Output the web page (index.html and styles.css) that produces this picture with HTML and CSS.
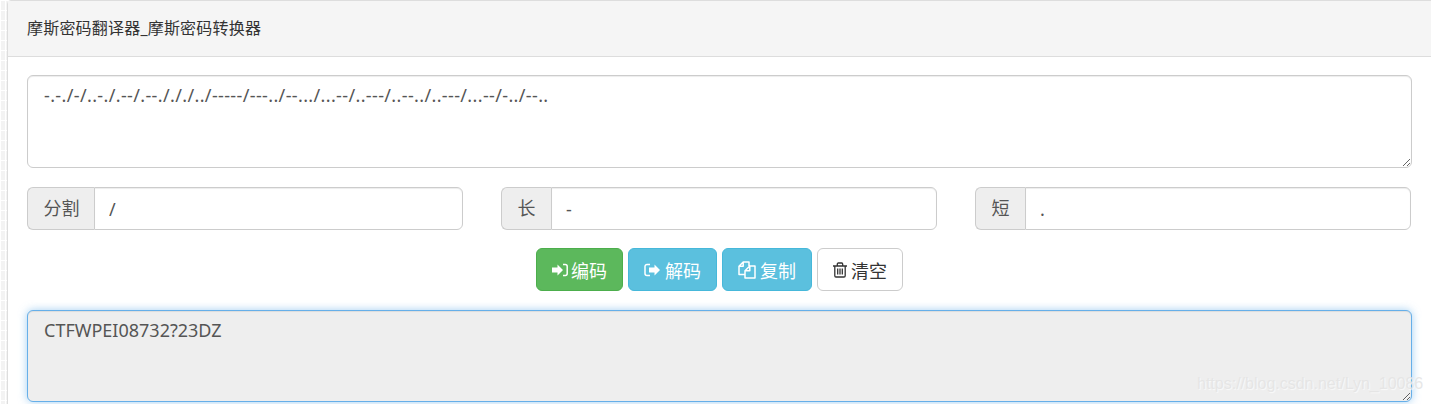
FILE: index.html
```html
<!DOCTYPE html>
<html lang="zh-CN">

<head>
    <meta charset="utf-8">
    <meta name="viewport" content="width=device-width, initial-scale=1.0">
    <title>摩斯密码翻译器_摩斯密码转换器</title>
    <link rel="stylesheet" href="styles.css">
</head>

<body>
    <section class="panel">
        <div class="panel_heading">摩斯密码翻译器_摩斯密码转换器</div>
        <div class="panel_body">
            <textarea class="code_box morse_box" spellcheck="false">-.-./-/..-./.--/.--./././../-----/---../--.../...--/..---/..--../..---/...--/-../--..</textarea>

            <div class="input_row">
                <div class="input_group">
                    <span class="addon addon_split">分割</span>
                    <input type="text" value="/">
                </div>
                <div class="input_group">
                    <span class="addon">长</span>
                    <input type="text" value="-">
                </div>
                <div class="input_group">
                    <span class="addon">短</span>
                    <input type="text" value=".">
                </div>
            </div>

            <div class="button_row">
                <button class="btn btn_green">
                    <svg class="icon" viewBox="0 0 16 16"><path fill="currentColor" d="M0 5.5h5.5v-3L11 8l-5.5 5.5v-3H0z"/><path fill="none" stroke="currentColor" stroke-width="1.5" d="M11 2.500h2.200a2 2 0 0 1 2 2v7a2 2 0 0 1-2 2H11"/></svg>
                    编码
                </button>
                <button class="btn btn_blue btn_decode">
                    <svg class="icon" viewBox="0 0 16 16"><path fill="none" stroke="currentColor" stroke-width="1.5" d="M6 2.500H3a2 2 0 0 0-2 2v7a2 2 0 0 0 2 2h3"/><path fill="currentColor" d="M5 5.5h5.5v-3L16 8l-5.500 5.500v-3H5z"/></svg>
                    解码
                </button>
                <button class="btn btn_blue">
                    <svg class="icon icon_copy" viewBox="0 0 18 18"><path fill="none" stroke="currentColor" stroke-width="1.5" stroke-linejoin="round" d="M11 5V1H5.200L1 5.200V13.500h6M5.200 1v4.200H1M11.800 5H17v12H7V9.800zM11.800 5v4.800H7"/></svg>
                    复制
                </button>
                <button class="btn btn_white">
                    <svg class="icon icon_trash" viewBox="0 0 14 16"><path fill="none" stroke="currentColor" stroke-width="1.3" d="M0 4h14M1.800 4v9.700c0 .8.500 1.300 1.200 1.300h8c.7 0 1.200-.5 1.200-1.300V4M4.300 4V2.200c0-.7.400-1.200 1-1.200h3.400c.6 0 1 .5 1 1.200V4M4.700 6.500v6M7 6.500v6M9.300 6.500v6"/></svg>
                    清空
                </button>
            </div>

            <textarea class="code_box result_box" spellcheck="false" readonly>CTFWPEI08732?23DZ</textarea>
        </div>
    </section>

    <div class="watermark">https://blog.csdn.net/Lyn_10086</div>
</body>

</html>
```

FILE: styles.css
```css
* {
    box-sizing: border-box;
}

html,
body {
    height: 100%;
}

body {
    margin: 0;
    overflow: hidden;
    position: relative;
    font-family: "Noto Sans", "Noto Sans CJK SC", sans-serif;
    color: #555;
    background-color: #f3f3f3;
    background-image:
        linear-gradient(white 1px, transparent 1px),
        linear-gradient(90deg, white 1px, transparent 1px);
    background-size: 5px 10px;
}

.panel {
    width: 1425px;
    height: 420px;
    margin-left: 7px;
    background-color: white;
    border: 1px solid #ddd;
    border-radius: 4px 0 0 0;
}

.panel_heading {
    height: 56px;
    padding: 0 19px;
    line-height: 55px;
    font-size: 16px;
    letter-spacing: 0.2px;
    color: #333;
    background-color: #f5f5f5;
    border-bottom: 1px solid #ddd;
}

.panel_body {
    padding: 18px 19px;
}

.code_box {
    display: block;
    width: 1385px;
    height: 93px;
    padding: 6px 16px;
    font-family: inherit;
    font-size: 18px;
    line-height: 26px;
    color: #555;
    background-color: white;
    border: 1px solid #ccc;
    border-radius: 6px;
    box-shadow: inset 0 1px 1px rgba(0, 0, 0, 0.075);
    outline: none;
}

.morse_box {
    letter-spacing: 0.36px;
}

.result_box {
    height: 92px;
    background-color: #eee;
    border-color: #66afe9;
    box-shadow: inset 0 1px 1px rgba(0, 0, 0, 0.075), 0 0 8px rgba(102, 175, 233, 0.6);
}

.input_row {
    display: grid;
    grid-template-columns: 436px 436px 436px;
    column-gap: 38px;
    margin-top: 19px;
}

.input_group {
    display: flex;
    height: 43px;
}

.addon {
    flex: none;
    padding: 0 15.5px;
    font-size: 18px;
    line-height: 41px;
    background-color: #eee;
    border: 1px solid #ccc;
    border-right: none;
    border-radius: 6px 0 0 6px;
}

.addon_split {
    padding-right: 14.5px;
}

.input_group input {
    flex: 1;
    min-width: 0;
    padding: 0 14px;
    font-family: inherit;
    font-size: 18px;
    color: #555;
    border: 1px solid #ccc;
    border-radius: 0 6px 6px 0;
    box-shadow: inset 0 1px 1px rgba(0, 0, 0, 0.075);
    outline: none;
}

.button_row {
    display: flex;
    justify-content: center;
    gap: 5px;
    margin: 18px 0 19px;
}

.btn {
    display: flex;
    align-items: center;
    justify-content: center;
    gap: 4px;
    height: 43px;
    padding: 0 15px;
    font-family: inherit;
    font-size: 18px;
    border: 1px solid transparent;
    border-radius: 6px;
}

.btn_green {
    gap: 3px;
    color: white;
    background-color: #5cb85c;
    border-color: #4cae4c;
}

.btn_blue {
    color: white;
    background-color: #5bc0de;
    border-color: #46b8da;
}

.btn_decode {
    gap: 5px;
}

.btn_white {
    color: #333;
    background-color: white;
    border-color: #ccc;
}

.icon {
    width: 16px;
    height: 16px;
}

.icon_copy {
    width: 18px;
    height: 18px;
}

.icon_trash {
    width: 14px;
}

.watermark {
    position: absolute;
    left: 1197px;
    top: 375px;
    font-family: "Liberation Sans", sans-serif;
    font-size: 16px;
    color: rgba(228, 228, 228, 0.9);
    text-shadow: 1px 1px 1px rgba(255, 255, 255, 0.7);
}
```
